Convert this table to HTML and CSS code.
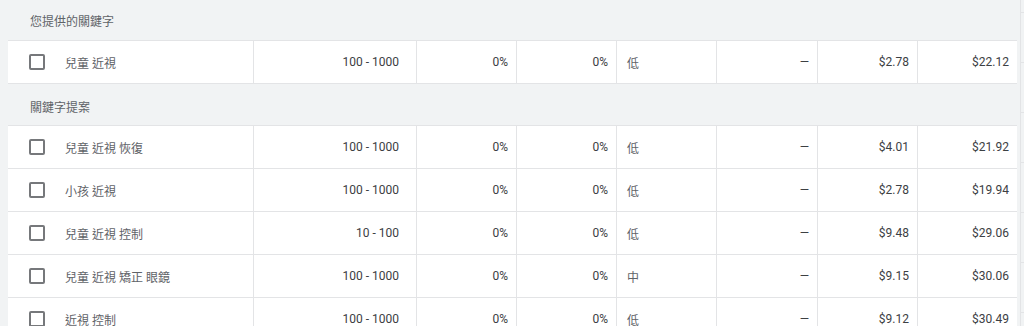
FILE: index.html
```html
<!DOCTYPE html>
<html lang="zh-Hant">
<head>
<meta charset="utf-8">
<title>關鍵字</title>
<link rel="stylesheet" href="styles.css">
</head>
<body>
<div class="page">
  <div class="table">
    <div class="section">您提供的關鍵字</div>
    <div class="group">
      <div class="row">
        <div class="cell kw"><span class="cb"></span><span class="kt">兒童 近視</span></div>
        <div class="cell num vol">100 - 1000</div>
        <div class="cell num">0%</div>
        <div class="cell num">0%</div>
        <div class="cell txt">低</div>
        <div class="cell num">—</div>
        <div class="cell num">$2.78</div>
        <div class="cell num last">$22.12</div>
      </div>
    </div>
    <div class="section s2">關鍵字提案</div>
    <div class="group">
      <div class="row">
        <div class="cell kw"><span class="cb"></span><span class="kt">兒童 近視 恢復</span></div>
        <div class="cell num vol">100 - 1000</div>
        <div class="cell num">0%</div>
        <div class="cell num">0%</div>
        <div class="cell txt">低</div>
        <div class="cell num">—</div>
        <div class="cell num">$4.01</div>
        <div class="cell num last">$21.92</div>
      </div>
      <div class="row">
        <div class="cell kw"><span class="cb"></span><span class="kt">小孩 近視</span></div>
        <div class="cell num vol">100 - 1000</div>
        <div class="cell num">0%</div>
        <div class="cell num">0%</div>
        <div class="cell txt">低</div>
        <div class="cell num">—</div>
        <div class="cell num">$2.78</div>
        <div class="cell num last">$19.94</div>
      </div>
      <div class="row">
        <div class="cell kw"><span class="cb"></span><span class="kt">兒童 近視 控制</span></div>
        <div class="cell num vol">10 - 100</div>
        <div class="cell num">0%</div>
        <div class="cell num">0%</div>
        <div class="cell txt">低</div>
        <div class="cell num">—</div>
        <div class="cell num">$9.48</div>
        <div class="cell num last">$29.06</div>
      </div>
      <div class="row">
        <div class="cell kw"><span class="cb"></span><span class="kt">兒童 近視 矯正 眼鏡</span></div>
        <div class="cell num vol">100 - 1000</div>
        <div class="cell num">0%</div>
        <div class="cell num">0%</div>
        <div class="cell txt">中</div>
        <div class="cell num">—</div>
        <div class="cell num">$9.15</div>
        <div class="cell num last">$30.06</div>
      </div>
      <div class="row">
        <div class="cell kw"><span class="cb"></span><span class="kt">近視 控制</span></div>
        <div class="cell num vol">100 - 1000</div>
        <div class="cell num">0%</div>
        <div class="cell num">0%</div>
        <div class="cell txt">低</div>
        <div class="cell num">—</div>
        <div class="cell num">$9.12</div>
        <div class="cell num last">$30.49</div>
      </div>
    </div>
  </div>
  <div class="edge"></div>
</div>
</body>
</html>
```

FILE: styles.css
```css
html, body {
  margin: 0;
  padding: 0;
  background: #f1f3f4;
}
body {
  font-family: Roboto, "Noto Sans CJK TC", "Noto Sans", sans-serif;
  font-size: 12px;
  color: #3c4043;
  overflow: hidden;
  height: 326px;
}
.page {
  display: flex;
  padding-left: 8px;
  height: 326px;
}
.table {
  width: 1009px;
  flex: none;
}
.section {
  height: 40px;
  display: flex;
  align-items: center;
  padding-left: 22px;
  color: #5f6368;
}
.section.s2 {
  height: 41px;
  padding-top: 4px;
  box-sizing: border-box;
}
.group {
  border-top: 1px solid #e3e4e6;
}
.row {
  display: grid;
  grid-template-columns: 246px 163px 100px 100px 100px 101px 100px 99px;
  height: 43px;
  background: #fff;
  border-bottom: 1px solid #e3e4e6;
  box-sizing: border-box;
}
.cell {
  border-right: 1px solid #e3e4e6;
  display: flex;
  align-items: center;
  white-space: nowrap;
}
.cell.last {
  border-right: none;
}
.kw {
  padding-left: 21px;
  gap: 20px;
}
.kt {
  color: #5f6368;
}
.txt {
  padding-left: 10px;
  color: #5f6368;
}
.cb {
  width: 16px;
  height: 16px;
  box-sizing: border-box;
  border: 2px solid #76787b;
  border-radius: 2px;
  flex: none;
}
.num {
  justify-content: flex-end;
  padding-right: 8px;
}
.num.vol {
  padding-right: 17px;
}
.edge {
  flex: none;
  width: 4px;
  margin-left: 3px;
  border-left: 1px solid #e3e4e6;
  background-position: 0 13px;
  background-size: 4px 50px;
  background-image: linear-gradient(to bottom, transparent 0, transparent 49px, #e3e4e6 49px, #e3e4e6 50px);
}
```
